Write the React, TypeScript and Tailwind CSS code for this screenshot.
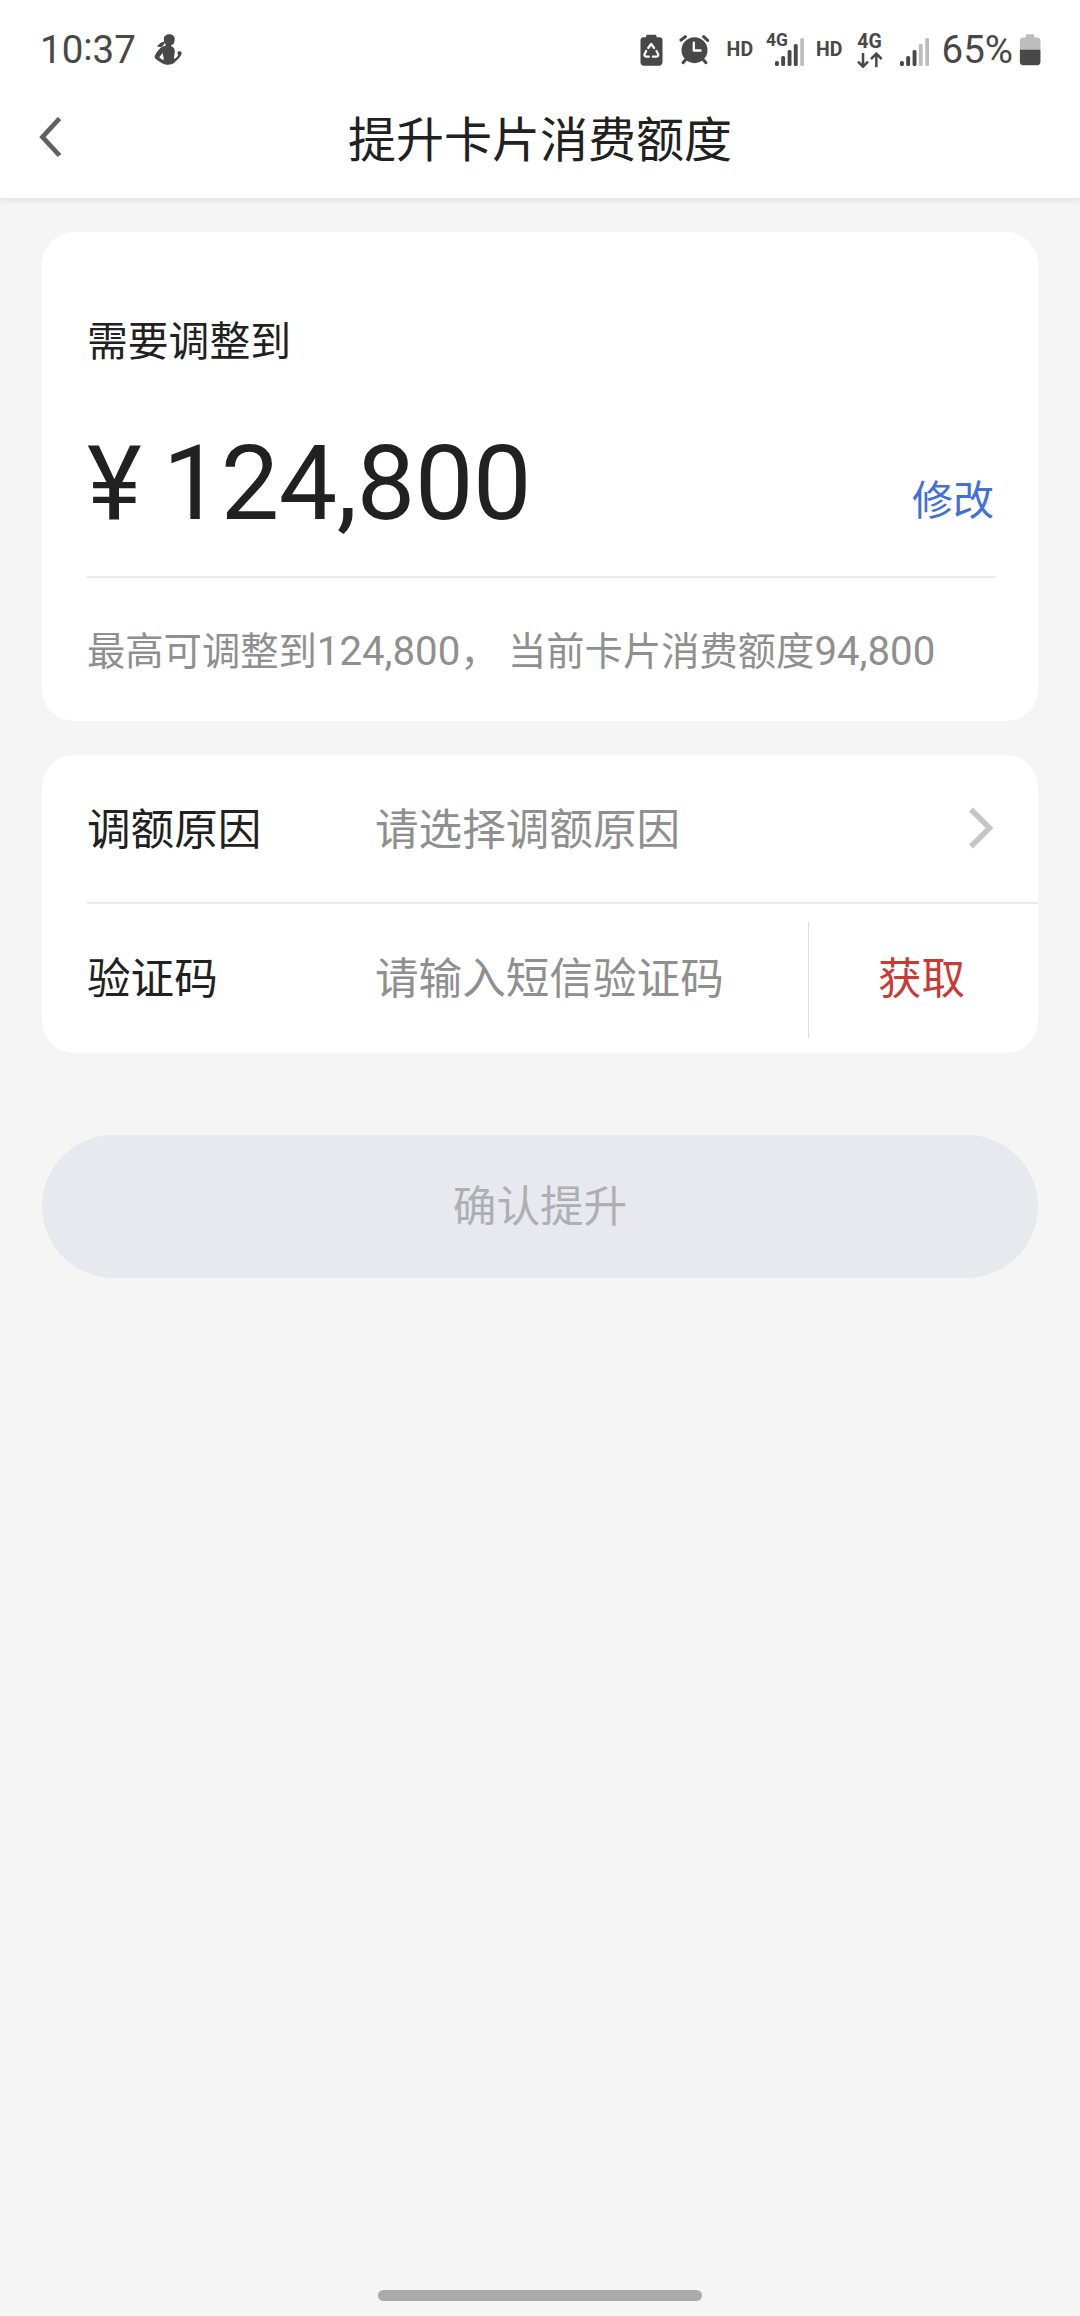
import type { ReactNode } from 'react';

const BARS = [
  { x: 0, y: 23, h: 5 },
  { x: 6.2, y: 18, h: 10 },
  { x: 12.6, y: 12, h: 16 },
  { x: 18.8, y: 6, h: 22 },
  { x: 25.2, y: 0, h: 28 },
];

function SignalBars({ level, className }: { level: number; className?: string }) {
  return (
    <svg viewBox="0 0 29 28" className={className} width="29" height="28">
      {BARS.map((bar, i) => (
        <rect
          key={bar.x}
          x={bar.x}
          y={bar.y}
          width="3.9"
          height={bar.h}
          rx="1.6"
          fill={i < level ? '#484848' : '#bdbdbd'}
        />
      ))}
    </svg>
  );
}

function FitnessIcon() {
  return (
    <svg viewBox="460 98 88 99" className="ml-[18px] h-[33px] w-[29px]" fill="#484848">
      <path d="M507 101c10 0 16 7 16 15 0 5-1 9-3 13-1 3-4 4-7 4l-1 5c8 3 11 8 11 15 0 9-3 15-2 23 4-1 8-4 12-10l-2-9c2-5 10-5 13-1 0 7-4 13-8 17-7 8-13 13-19 18-8 3-18 4-25 1-10-3-20-10-28-17-4-4-2-9 1-13 5-9 11-17 18-22 4-2 9-3 13-5l-1-4c-4-4-5-9-5-16 0-9 7-14 17-14zM486 158l-10 13c4 4 8 7 13 9 1-8-1-15-3-22z" fillRule="evenodd" />
      <path d="M495 124c-9-1-15 2-20 8l-6 6c9 4 17 1 21-6z" />
    </svg>
  );
}

function BatterySaverIcon() {
  return (
    <svg viewBox="62 42 68 96" className="ml-auto h-[32px] w-[23px]">
      <path
        d="M84 44h23c3 0 4 2 4 4v4h9c6 0 9 4 9 9v66c0 6-4 10-9 10H72c-6 0-9-4-9-10V61c0-5 4-9 9-9h8v-4c0-2 1-4 4-4z"
        fill="#484848"
      />
      <g fill="none" stroke="#fff" strokeWidth="6.5" strokeLinecap="round" strokeLinejoin="round">
        <path d="M86 84l9-12 9 12" />
        <path d="M80 93l-5 10c-1 4 1 7 5 7h8" />
        <path d="M111 93l5 10c1 4-1 7-5 7h-11" />
      </g>
    </svg>
  );
}

function AlarmIcon() {
  return (
    <svg viewBox="178 44 92 92" className="ml-[16px] h-[31px] w-[31px]">
      <circle cx="224" cy="92" r="38.5" fill="#484848" />
      <g fill="none" stroke="#484848" strokeWidth="9" strokeLinecap="round">
        <path d="M184 62l13-10M263 63l-12-11M197 121l-7 8M251 121l7 8" />
      </g>
      <path d="M222 70v23h20" fill="none" stroke="#fff" strokeWidth="7" strokeLinecap="round" strokeLinejoin="round" />
    </svg>
  );
}

function DataArrows() {
  return (
    <svg viewBox="50 96 78 48" className="mt-[2px] h-[16px] w-[26px]" fill="none" stroke="#484848" strokeWidth="7.5">
      <path d="M68 99v41M53 125l15 15 15-15M108 142v-41M92 117l16-16 16 16" />
    </svg>
  );
}

function BatteryIcon() {
  return (
    <svg viewBox="538 38 66 98" className="ml-[6px] h-[32px] w-[22px]">
      <path d="M562 39h18c3 0 4 2 4 4v6h9c6 0 10 4 10 10v28h-63V59c0-6 4-10 10-10h8v-6c0-2 1-4 4-4z" fill="#bdbdbd" />
      <path d="M540 86h63v38c0 6-4 10-10 10h-43c-6 0-10-4-10-10z" fill="#484848" />
    </svg>
  );
}

function StatusBar() {
  return (
    <div className="flex h-[78px] items-center pt-[21px] pr-[39px] pl-[40px] text-[#484848]">
      <div className="flex h-[58px] w-full items-center">
        <span className="text-[38.500px] leading-[44px]">
          10<span className="relative -top-[3px]">:</span>37
        </span>
        <FitnessIcon />
        <BatterySaverIcon />
        <AlarmIcon />
        <span className="ml-[17px] text-[19.500px] leading-none font-bold">HD</span>
        <div className="relative ml-[22px] h-[32px] w-[30px]">
          <SignalBars level={4} className="absolute top-[4px] left-0" />
          <span className="absolute -top-[2px] -left-[9px] text-[17.500px] leading-none font-bold">4G</span>
        </div>
        <span className="ml-[11px] text-[19.500px] leading-none font-bold">HD</span>
        <div className="ml-[14px] flex flex-col items-center">
          <span className="pt-[1px] text-[19.500px] leading-[17px] font-bold">4G</span>
          <DataArrows />
        </div>
        <SignalBars level={3} className="mt-[4px] ml-[17px]" />
        <span className="ml-[13px] text-[38.500px] leading-[44px]">65%</span>
        <BatteryIcon />
      </div>
    </div>
  );
}

function Header() {
  return (
    <header className="z-10 h-[198px] shrink-0 bg-white shadow-[0_2px_7px_rgba(0,0,0,0.1)]">
      <StatusBar />
      <div className="grid h-[120px] grid-cols-[120px_1fr_120px] items-center">
        <button type="button" aria-label="返回" className="pb-[2px] pl-[38px]">
          <svg viewBox="0 0 24 42" className="h-[42px] w-[24px]" fill="none" stroke="#606060" strokeWidth="4.8">
            <path d="M21.500 2.500L4.500 21l17 18.500" />
          </svg>
        </button>
        <h1 className="pt-[6px] text-center text-[48px] leading-[60px]">提升卡片消费额度</h1>
      </div>
    </header>
  );
}

function AmountCard() {
  return (
    <section className="flex h-[489px] flex-col rounded-[32px] bg-white pr-[42px] pl-[45px]">
      <h2 className="mt-[80px] text-[40.800px] leading-[60px]">需要调整到</h2>
      <div className="mt-[31px] flex h-[175px] items-end justify-between border-b-2 border-[#ebebeb]">
        <span className="mb-[32px] text-[104px] leading-[120px] tracking-[-0.400px] whitespace-pre [word-spacing:-4px]">
          ¥ 124,800
        </span>
        <button type="button" className="mr-[2px] mb-[45px] text-[41px] leading-[60px] text-[#4370d6]">
          修改
        </button>
      </div>
      <p className="mt-[44px] text-[38.300px] leading-[60px] whitespace-pre text-[#8f8f8f]">
        最高可调整到<span className="text-[40.200px]">124,800</span>， 当前卡片消费额度
        <span className="text-[40.200px]">94,800</span>
      </p>
    </section>
  );
}

function FormRow({ label, placeholder, children }: { label: string; placeholder: string; children: ReactNode }) {
  return (
    <div className="flex h-full items-center text-[43.600px] leading-[60px]">
      <span className="w-[288px]">{label}</span>
      <span className="flex-1 text-[#8f8f8f]">{placeholder}</span>
      {children}
    </div>
  );
}

export default function App() {
  return (
    <div className="flex h-[2316px] w-[1080px] flex-col overflow-hidden bg-[#f5f5f5] font-['Roboto','Noto_Sans_CJK_SC',sans-serif] text-[#212121]">
      <Header />

      <main className="flex flex-1 flex-col px-[42px] pt-[34px]">
        <AmountCard />

        <section className="mt-[34px] h-[298px] rounded-[32px] bg-white pl-[45px]">
          <div className="h-[149px] border-b-2 border-[#e9e9e9] pt-[4px]">
            <FormRow label="调额原因" placeholder="请选择调额原因">
              <svg viewBox="0 0 26 42" className="mr-[44px] mb-[5px] h-[42px] w-[26px]" fill="none" stroke="#c6c6c6" strokeWidth="5.5">
                <path d="M3 2.500L21.500 21 3 39.500" />
              </svg>
            </FormRow>
          </div>
          <div className="h-[149px] pt-[2px]">
            <FormRow label="验证码" placeholder="请输入短信验证码">
              <button
                type="button"
                className="h-[116px] w-[230px] border-l border-[#dedede] pr-[4px] text-[#ca3a35]"
              >
                获取
              </button>
            </FormRow>
          </div>
        </section>

        <button
          type="button"
          disabled
          className="mt-[82px] h-[143px] rounded-full bg-[#e8e9ee] pt-[2px] text-[43.600px] leading-[60px] text-[#aeafb3]"
        >
          确认提升
        </button>
      </main>

      <div className="mb-[15px] h-[11px] w-[324px] self-center rounded-full bg-[#aaaaaa]" />
    </div>
  );
}
